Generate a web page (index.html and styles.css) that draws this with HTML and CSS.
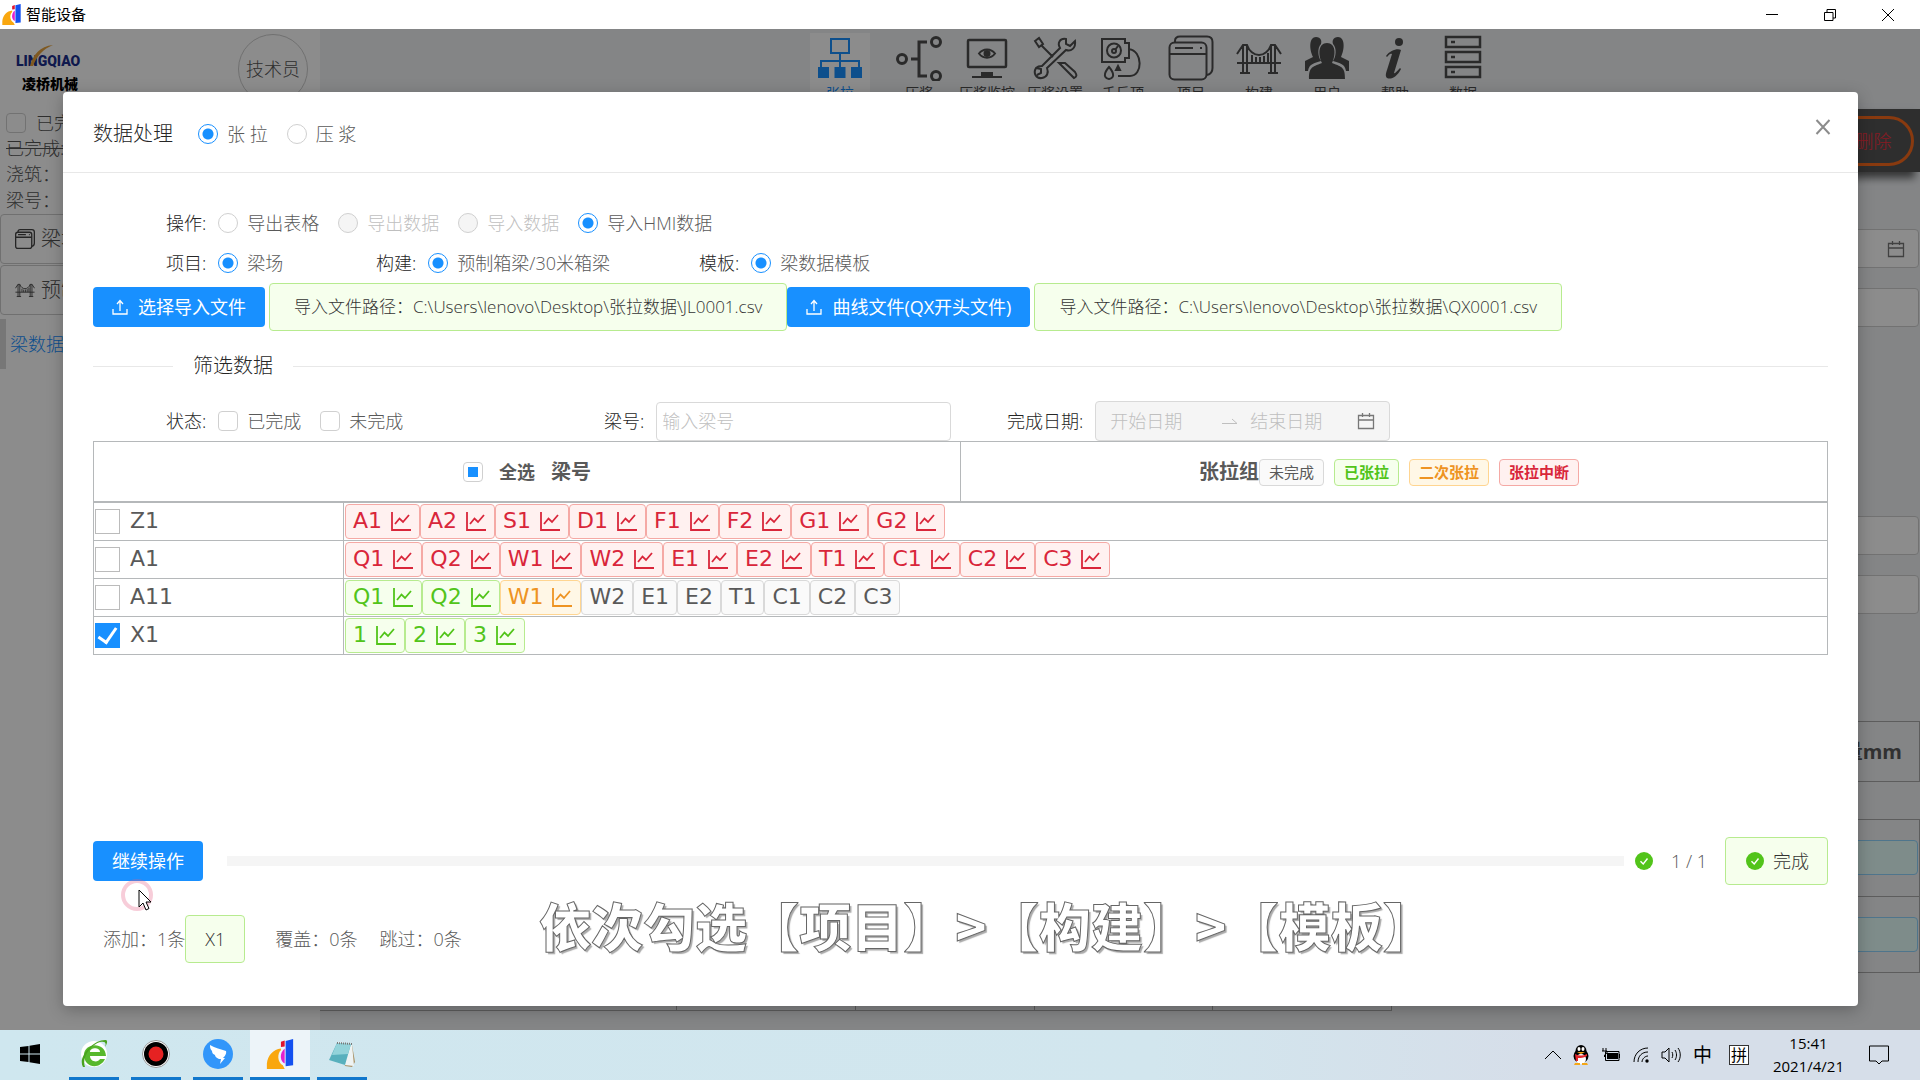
FILE: index.html
```html
<!DOCTYPE html>
<html lang="zh-CN">
<head>
<meta charset="utf-8">
<title>智能设备</title>
<link rel="stylesheet" href="styles.css">
</head>
<body>
<svg class="sprite" aria-hidden="true">
  <symbol id="brand" viewBox="0 0 28 32"><path d="M0 32V26C1 17 7 11 15 10V12C11 15 11 25 17 28L19 32Z" fill="#f9a70f"/><path d="M15 3L19 1.500V8L15 8.500Z" fill="#e0142d"/><path d="M19 10V26C14 24 13 15 19 10Z" fill="#e020d0"/><path d="M20 2L28 0V28L20 29Z" fill="#1450f0"/></symbol>
  <symbol id="chart" viewBox="0 0 22 22"><path d="M2 2V20H21M5 14L9.500 8.500L13 12L19 5" fill="none" stroke="currentColor" stroke-width="1.800"/></symbol>
  <symbol id="upload" viewBox="0 0 16 16"><path d="M1 10V15H15V10M8 12V2M5 5L8 1.500L11 5" fill="none" stroke="currentColor" stroke-width="1.300"/></symbol>
  <symbol id="calendar" viewBox="0 0 18 18"><path d="M1.500 3.500H16.500V16.500H1.500ZM1.500 8H16.500M5.500 1V5M12.500 1V5" fill="none" stroke="currentColor" stroke-width="1.300"/></symbol>
  <symbol id="done" viewBox="0 0 18 18"><circle cx="9" cy="9" r="9" fill="#52c41a"/><path d="M5.500 9.200L8.200 12L12.500 6.500" fill="none" stroke="#fff" stroke-width="1.400"/></symbol>
  <symbol id="windows" viewBox="0 0 46 46"><rect x="1.500" y="7.500" width="37" height="37" rx="5"/><path d="M7 7.500V6C7 3 9 1.500 12 1.500H39C43 1.500 44.500 4 44.500 7V33C44.500 37 43 39 39 40M1.500 19H38.500M7 13H25M32 13H34"/></symbol>
  <symbol id="bridge" viewBox="0 0 46 46"><path d="M1 19L7 10H11C13 16 18 20 23 20S33 16 35 10H39L45 19M7 10V38M11 10V38M35 10V38M39 10V38M1 28H45M4 38H14M32 38H42M16 20V28M20 22V28M24 22V28M28 21V28M32 18V28"/></symbol>
</svg>

<header class="titlebar">
  <svg class="titlebar-logo"><use href="#brand"/></svg>
  <h1 class="titlebar-name">智能设备</h1>
  <button class="win-btn" aria-label="最小化"><svg viewBox="0 0 12 12"><path d="M0 5.500H12"/></svg></button>
  <button class="win-btn" aria-label="还原"><svg viewBox="0 0 12 12"><path d="M.5 3.500H9V11.500H.5ZM3 3V.5H11.500V9H9"/></svg></button>
  <button class="win-btn" aria-label="关闭"><svg viewBox="0 0 12 12"><path d="M0 0L12 12M12 0L0 12"/></svg></button>
</header>

<div class="app">
  <div class="workspace">
    <aside class="sidebar">
      <div class="sidebar-top">
        <svg class="company" viewBox="0 0 66 52"><text x="0" y="20" class="company-en">LINGQIAO</text><path d="M14 20C17 9 24 0 37 -1C27 3 21 10 17 20Z" fill="#e8a33c"/><text x="6" y="43" class="company-cn">凌桥机械</text></svg>
        <span class="avatar">技术员</span>
      </div>
      <label class="side-check"><input type="checkbox" class="box">已完成</label>
      <p class="side-line struck">已完成:</p>
      <p class="side-line">浇筑：</p>
      <p class="side-line">梁号：</p>
      <a class="side-item" href="#"><svg class="line-icon"><use href="#windows"/></svg>梁场</a>
      <a class="side-item" href="#"><svg class="line-icon thinner"><use href="#bridge"/></svg>预制</a>
      <a class="side-current" href="#">梁数据</a>
    </aside>
    <main class="main">
      <nav class="menu">
        <a class="menu-item active" href="#"><svg viewBox="0 0 46 46"><path d="M14 4H32V18H14ZM23 18V36M4 34V26H42V34"/><path class="solid" d="M2 33H11V42H2ZM18.500 33H27.500V42H18.500ZM35 33H44V42H35Z"/></svg>张拉</a>
        <a class="menu-item" href="#"><svg viewBox="0 0 46 46"><g stroke-width="3"><circle cx="6" cy="24" r="4.500"/><circle cx="40" cy="7" r="4.500"/><circle cx="40" cy="41" r="4.500"/><path d="M15 24H22M31 7H23V41H31"/></g></svg>压浆</a>
        <a class="menu-item" href="#"><svg viewBox="0 0 46 46"><rect x="4" y="5" width="38" height="27" rx="1" stroke-width="2.500"/><path d="M15 18.500C19 13 27 13 31 18.500C27 24 19 24 15 18.500Z"/><circle class="solid" cx="23" cy="18.500" r="2.500"/><path class="solid" d="M17 37H29V41H38V43H8V41H17Z" stroke="none"/></svg>压浆监控</a>
        <a class="menu-item" href="#"><svg viewBox="0 0 46 46"><path d="M3 6L7 3L11 9L7 12ZM9 10L21 22M27 28L32 33L42 43C45 42 45 40 43 37L33 28ZM4 33C1 38 4 44 10 43C15 42 17 38 15 33L34 15C39 17 44 13 43 6L38 11L34 9V4C28 3 25 8 28 13L10 31C8 31 6 31 4 33ZM4 33L9 34V38L5 40"/></svg>压浆设置</a>
        <a class="menu-item" href="#"><svg viewBox="0 0 46 46"><path d="M2 4H25V8H29V23H25V27H2ZM29 14C43 16 43 41 30 41H18M9 32C3 39 4 43 9 44C14 43 15 39 9 32Z"/><circle cx="14" cy="15.500" r="7"/><circle cx="14" cy="16" r="2"/><path d="M15 15L18 11"/><path class="solid" d="M18 31L20 35H16Z"/></svg>千斤顶</a>
        <a class="menu-item" href="#"><svg viewBox="0 0 46 46"><use href="#windows"/></svg>项目</a>
        <a class="menu-item" href="#"><svg viewBox="0 0 46 46"><use href="#bridge"/></svg>构建</a>
        <a class="menu-item" href="#"><svg viewBox="0 0 46 46"><path class="solid" stroke="none" d="M1 36V26L9 22C5 14 5 2 12 2C17 2 18 6 17 9C13 13 14 22 17 26C10 28 5 29 4 36ZM45 36V26L37 22C41 14 41 2 34 2C29 2 28 6 29 9C33 13 32 22 29 26C36 28 41 29 42 36ZM5 44C5 33 7 32 18 28C14 20 14 8 23 8S32 20 28 28C39 32 41 33 41 44Z"/></svg>用户</a>
        <a class="menu-item" href="#"><svg viewBox="0 0 46 46"><circle class="solid" stroke="none" cx="27" cy="7" r="4"/><path class="solid" stroke="none" d="M14 21C18 15 26 13 29 15L22 38C23 39 25 36 28 33L29 34C25 42 19 45 15 43C13 41 14 38 15 35L20 19C18 18 17 20 15 22Z"/></svg>帮助</a>
        <a class="menu-item" href="#"><svg viewBox="0 0 46 46"><path stroke-width="2.500" d="M6 2H40V12H6ZM6 17H40V27H6ZM6 32H40V42H6ZM11 7H15M11 22H15M11 37H15"/></svg>数据</a>
      </nav>
      <div class="toolbar"><button class="delete">删除</button></div>
      <div class="bg-form">
        <div class="bg-field"><svg class="cal"><use href="#calendar"/></svg></div>
        <div class="bg-field"></div>
        <div class="bg-field later"></div>
        <div class="bg-field"></div>
      </div>
      <div class="bg-head">伸长量mm</div>
      <div class="bg-rows">
        <div class="bg-row"><div class="bg-cell"></div></div>
        <div class="bg-row"><div class="bg-cell"></div></div>
      </div>
      <div class="bg-grid"><i></i><i></i><i></i><i></i><i></i></div>
    </main>
  </div>

  <div class="mask">
    <section class="modal" role="dialog" aria-label="数据处理">
      <header class="modal-head">
        <h2 class="modal-title">数据处理</h2>
        <label class="opt"><input type="radio" name="kind" checked>张 拉</label>
        <label class="opt"><input type="radio" name="kind">压 浆</label>
        <button class="close" aria-label="关闭"><svg viewBox="0 0 16 16"><path d="M1.500 1L14.500 15M14.500 1L1.500 15"/></svg></button>
      </header>
      <div class="modal-body">
        <div class="form-row">
          <div class="field"><span class="name">操作:</span>
            <label class="opt"><input type="radio" name="op">导出表格</label>
            <label class="opt off"><input type="radio" name="op" disabled>导出数据</label>
            <label class="opt off"><input type="radio" name="op" disabled>导入数据</label>
            <label class="opt"><input type="radio" name="op" checked>导入HMI数据</label>
          </div>
        </div>
        <div class="form-row">
          <div class="field col-a"><span class="name">项目:</span><label class="opt"><input type="radio" name="project" checked>梁场</label></div>
          <div class="field col-b"><span class="name">构建:</span><label class="opt"><input type="radio" name="part" checked>预制箱梁/30米箱梁</label></div>
          <div class="field"><span class="name">模板:</span><label class="opt"><input type="radio" name="tpl" checked>梁数据模板</label></div>
        </div>
        <div class="files">
          <button class="primary"><svg><use href="#upload"/></svg>选择导入文件</button>
          <span class="note path">导入文件路径：C:\Users\lenovo\Desktop\张拉数据\JL0001.csv</span>
          <button class="primary"><svg><use href="#upload"/></svg>曲线文件(QX开头文件)</button>
          <span class="note path">导入文件路径：C:\Users\lenovo\Desktop\张拉数据\QX0001.csv</span>
        </div>
        <h3 class="divider">筛选数据</h3>
        <div class="form-row">
          <div class="field col-c"><span class="name">状态:</span>
            <label class="opt"><input type="checkbox" class="box">已完成</label>
            <label class="opt"><input type="checkbox" class="box">未完成</label>
          </div>
          <div class="field col-d"><label class="name" for="beam">梁号:</label><input id="beam" class="text" type="text" placeholder="输入梁号"></div>
          <div class="field"><label class="name" for="from">完成日期:</label>
            <div class="range"><input id="from" type="text" placeholder="开始日期" disabled><svg class="arrow" viewBox="0 0 16 10"><path d="M0 7.500H15L10 3"/></svg><input type="text" aria-label="结束日期" placeholder="结束日期" disabled><svg class="cal"><use href="#calendar"/></svg></div>
          </div>
        </div>
        <table class="beams">
          <colgroup><col class="c1"><col><col class="c3"></colgroup>
          <thead><tr>
            <th colspan="2"><div class="th"><label class="all"><input type="checkbox" class="box partial">全选</label>梁号</div></th>
            <th><div class="th groups">张拉组<span class="key plain">未完成</span><span class="key green">已张拉</span><span class="key orange">二次张拉</span><span class="key red">张拉中断</span></div></th>
          </tr></thead>
          <tbody>
            <tr><td><label class="beam"><input type="checkbox">Z1</label></td><td colspan="2"><div class="tags">
              <span class="tag red">A1<svg><use href="#chart"/></svg></span><span class="tag red">A2<svg><use href="#chart"/></svg></span><span class="tag red">S1<svg><use href="#chart"/></svg></span><span class="tag red">D1<svg><use href="#chart"/></svg></span><span class="tag red">F1<svg><use href="#chart"/></svg></span><span class="tag red">F2<svg><use href="#chart"/></svg></span><span class="tag red">G1<svg><use href="#chart"/></svg></span><span class="tag red">G2<svg><use href="#chart"/></svg></span></div></td></tr>
            <tr><td><label class="beam"><input type="checkbox">A1</label></td><td colspan="2"><div class="tags">
              <span class="tag red">Q1<svg><use href="#chart"/></svg></span><span class="tag red">Q2<svg><use href="#chart"/></svg></span><span class="tag red">W1<svg><use href="#chart"/></svg></span><span class="tag red">W2<svg><use href="#chart"/></svg></span><span class="tag red">E1<svg><use href="#chart"/></svg></span><span class="tag red">E2<svg><use href="#chart"/></svg></span><span class="tag red">T1<svg><use href="#chart"/></svg></span><span class="tag red">C1<svg><use href="#chart"/></svg></span><span class="tag red">C2<svg><use href="#chart"/></svg></span><span class="tag red">C3<svg><use href="#chart"/></svg></span></div></td></tr>
            <tr><td><label class="beam"><input type="checkbox">A11</label></td><td colspan="2"><div class="tags">
              <span class="tag green">Q1<svg><use href="#chart"/></svg></span><span class="tag green">Q2<svg><use href="#chart"/></svg></span><span class="tag orange">W1<svg><use href="#chart"/></svg></span><span class="tag plain">W2</span><span class="tag plain">E1</span><span class="tag plain">E2</span><span class="tag plain">T1</span><span class="tag plain">C1</span><span class="tag plain">C2</span><span class="tag plain">C3</span></div></td></tr>
            <tr><td><label class="beam"><input type="checkbox" checked>X1</label></td><td colspan="2"><div class="tags">
              <span class="tag green">1<svg><use href="#chart"/></svg></span><span class="tag green">2<svg><use href="#chart"/></svg></span><span class="tag green">3<svg><use href="#chart"/></svg></span></div></td></tr>
          </tbody>
        </table>
        <div class="run">
          <div class="run-btn"><button class="primary">继续操作</button><span class="click-ring"></span><svg class="cursor" viewBox="0 0 14 22"><path d="M1 1V18L5 14L8 21L11 19.500L8 13H13Z"/></svg></div>
          <div class="bar" role="progressbar"></div>
          <svg class="ok"><use href="#done"/></svg>
          <span class="count">1 / 1</span>
          <span class="note finished"><svg class="ok"><use href="#done"/></svg>完成</span>
        </div>
        <div class="summary"><span>添加：1条</span><span class="note added">X1</span><span class="sum-b">覆盖：0条</span><span class="sum-c">跳过：0条</span></div>
      </div>
    </section>
  </div>
  <p class="caption">依次勾选【项目】&gt;【构建】&gt;【模板】</p>
</div>

<footer class="taskbar">
  <button class="task start" aria-label="开始"><svg viewBox="0 0 20 20" width="20" height="20"><path d="M0 3L8.500 2V9.500H0ZM9.500 1.800L20 0V9.500H9.500ZM0 10.500H8.500V18L0 17ZM9.500 10.500H20V20L9.500 18.200Z"/></svg></button>
  <button class="task open" aria-label="浏览器"><svg viewBox="0 0 28 30" width="28" height="30"><circle cx="14" cy="15" r="13" fill="#fff"/><path fill-rule="evenodd" d="M26 17H10C10 23 18 24 20 20H25C20 31 4 29 4 16C4 4 25 2 26 17ZM10 13H20C20 8 10 8 10 13Z" fill="#57b82c"/><path d="M3 28C-3 18 14 0 26 1C28 2 27 5 25 8C27 3 24 2 20 3C12 5 1 18 5 28Z" fill="#49a31e"/></svg></button>
  <button class="task open" aria-label="录屏"><svg viewBox="0 0 28 28" width="28" height="28"><circle cx="14" cy="14" r="13.500" fill="#fff" stroke="#999"/><circle cx="14" cy="14" r="12"/><circle cx="14" cy="14" r="7.500" fill="#e62222"/></svg></button>
  <button class="task open" aria-label="钉钉"><svg viewBox="0 0 30 30" width="30" height="30"><circle cx="15" cy="15" r="15" fill="#3296fa"/><path d="M7 6C12 9 18 10 23 12C24 15 21 18 20 19H22L17 25L18 20H16C13 19 12 17 12 16C10 15 9 14 9 12C7 10 7 8 7 6Z" fill="#fff"/></svg></button>
  <button class="task open current" aria-label="智能设备"><svg width="28" height="30"><use href="#brand"/></svg></button>
  <button class="task open" aria-label="记事本"><svg viewBox="0 0 28 28" width="28" height="28"><path d="M10 3L24 5L27 22L24 27L17 26Z" fill="#a98f62"/><path d="M10 2L24 4L26 26L16 25Z" fill="#eef3f3"/><path d="M9 3L23 4L17 25L1 20Z" fill="#58b0bd"/><path d="M9 3L23 4L20 14L4 15Z" fill="#93d3da"/><path d="M9 3L24 4" stroke="#777" stroke-dasharray="1 1" stroke-width="2"/></svg></button>
  <div class="tray">
    <svg viewBox="0 0 16 10" width="16" height="10"><path d="M0 9L8 1L16 9" class="thin"/></svg>
    <svg viewBox="0 0 16 20" width="16" height="20"><ellipse cx="8" cy="11" rx="7.500" ry="7"/><ellipse cx="8" cy="6" rx="5.500" ry="6"/><ellipse cx="8" cy="14" rx="5" ry="5" fill="#fff"/><path d="M2 9C6 11 10 11 14 9V11C10 13 8 13 5 13V16H3Z" fill="#e3252b"/><ellipse cx="6" cy="4" rx="1.500" ry="2" fill="#fff"/><ellipse cx="10" cy="4" rx="1.500" ry="2" fill="#fff"/><path d="M4 7H12L8 9ZM2 18H7V20H1ZM9 18H14L15 20H9Z" fill="#f5a616"/></svg>
    <svg viewBox="0 0 20 14" width="20" height="14"><path d="M4.500 3.500H18V12.500H4.500ZM18.500 6V10M2 0V3M5 0V3M1 3H6V5L3.500 7V9" class="thin"/><path d="M6 5H17V11H6Z"/></svg>
    <svg viewBox="0 0 16 16" width="16" height="16"><path d="M1 15C1 7 7 1 15 1M5 15C5 9 9 5 15 5M9 15C9 12 12 9 15 9" class="thin"/><circle cx="14" cy="14" r="1.700"/></svg>
    <svg viewBox="0 0 20 16" width="20" height="16"><path d="M1 5H4L8 1V15L4 11H1ZM11 5C12 7 12 9 11 11M14 3C16 6 16 10 14 13M17 1C20 5 20 11 17 15" class="thin"/></svg>
    <span class="ime">中</span>
    <span class="pinyin">拼</span>
    <span class="clock"><time>15:41</time><time>2021/4/21</time></span>
    <svg viewBox="0 0 20 20" width="20" height="20" class="notice"><path d="M.5 1H19.500V16H13L10 19L7 16H.5Z" class="thin"/></svg>
  </div>
</footer>
</body>
</html>
```
FILE: styles.css
```css
* { box-sizing: border-box; }
body {
  margin: 0;
  height: 100vh;
  display: flex;
  flex-direction: column;
  overflow: hidden;
  font: 300 18px/28px "Open Sans", "Noto Sans CJK SC", sans-serif;
  color: #595959;
}
h1, h2, h3, p { margin: 0; font-weight: inherit; }
button, input { font: inherit; color: inherit; margin: 0; padding: 0; border: 0; background: none; flex: none; }
a { color: inherit; text-decoration: none; }
svg { flex: none; }
.sprite { position: absolute; width: 0; height: 0; }

/* window frame */
.titlebar { display: flex; align-items: center; height: 29px; padding-right: 3px; background: #fff; }
.titlebar-logo { width: 19px; height: 21px; margin: 0 5px 0 2px; }
.titlebar-name { flex: 1; font-size: 15px; line-height: 26px; height: 28px; font-weight: 400; color: #000; }
.win-btn { width: 58px; height: 29px; display: flex; align-items: center; justify-content: center; }
.win-btn svg { width: 12px; height: 12px; fill: none; stroke: #000; overflow: visible; }

/* page behind the dialog */
.app { position: relative; flex: 1; min-height: 0; overflow: hidden; }
.workspace { display: flex; height: 100%; }
.sidebar { width: 320px; background: #fff; color: #555; }
.sidebar-top { display: flex; justify-content: space-between; align-items: flex-start; height: 80px; padding: 5px 12px 0 16px; }
.company { width: 66px; height: 52px; margin-top: 12px; overflow: visible; }
.company-en { font: 900 14px Roboto, sans-serif; fill: #1c2f8c; }
.company-cn { font: 900 14px "Noto Sans CJK SC", sans-serif; fill: #000; }
.avatar { width: 70px; height: 70px; border: 1px solid #ccc; border-radius: 50%; display: flex; align-items: center; justify-content: center; }
.side-check { display: flex; align-items: center; gap: 10px; padding-left: 6px; height: 27px; }
.side-line { height: 26px; line-height: 24px; padding-left: 6px; }
.struck { text-decoration: line-through; }
.side-item { display: flex; align-items: center; gap: 6px; height: 50px; margin-bottom: 1px; padding-left: 14px; border: 1px solid #ccc; border-radius: 4px; font-size: 20px; }
.line-icon { width: 20px; height: 20px; fill: none; stroke: #444; stroke-width: 3; }
.thinner { stroke-width: 2; }
.side-current { display: block; margin-top: 4px; height: 50px; line-height: 50px; padding-left: 4px; border-left: 6px solid #d9d9d9; color: #1890ff; }
.main { flex: 1; min-width: 0; background: #f0f2f5; }
.menu { display: flex; justify-content: center; height: 80px; padding: 4px 0 0 67px; overflow: hidden; }
.menu-item { width: 68px; flex: none; text-align: center; font-size: 14px; font-weight: 400; line-height: 20px; color: #4d4d4d; white-space: nowrap; }
.menu-item svg { display: block; width: 46px; height: 46px; margin: 2px auto; fill: none; stroke: #4d4d4d; stroke-width: 2; }
.menu-item .solid { fill: #4d4d4d; }
.menu-item.active { width: 60px; margin-right: 15px; background: #fff; color: #1890ff; }
.menu-item.active svg { stroke: #1890ff; }
.menu-item.active .solid { fill: #1890ff; }
.toolbar { display: flex; justify-content: flex-end; align-items: center; height: 63px; padding-right: 6px; background: #555; box-shadow: -5px 6px 8px rgba(0, 0, 0, .6); }
.delete { width: 120px; height: 50px; border: 3px solid #f96a1c; border-radius: 25px; color: #f53040; padding-left: 39px; }
.bg-form { padding: 57px 1px 0; display: flex; flex-direction: column; gap: 20px; }
.bg-field { display: flex; align-items: center; justify-content: flex-end; height: 39px; padding-right: 13px; border: 1px solid #d0d0d0; border-radius: 4px; background: #fff; }
.later { margin-top: 169px; }
.cal { width: 18px; height: 18px; color: #777; }
.bg-head { margin-top: 107px; height: 61px; line-height: 60px; border: 1px solid #aaa; padding-right: 17px; text-align: right; font-size: 20px; font-weight: 700; }
.bg-rows { margin-top: 37px; border: 1px solid #aaa; }
.bg-row { height: 76px; padding: 20px 1px; }
.bg-row + .bg-row { border-top: 1px solid #aaa; }
.bg-cell { height: 35px; border: 1px solid #91d5ff; border-radius: 4px; background: #e6fffb; }
.bg-grid { display: grid; grid-template-columns: 2fr 1fr 1fr 1fr 1fr; width: 67%; height: 38px; }
.bg-grid i { border: solid #aaa; border-width: 0 1px 1px 0; }

/* dialog */
.mask { position: absolute; inset: 0; display: flex; padding: 63px 62px 24px 63px; background: rgba(0, 0, 0, .45); }
.modal { flex: 1; min-width: 0; display: flex; flex-direction: column; background: #fff; border-radius: 4px; box-shadow: 0 4px 16px rgba(0, 0, 0, .25); }
.modal-head { display: flex; align-items: center; height: 81px; padding: 3px 30px 0; border-bottom: 1px solid #e8e8e8; }
.modal-title { font-size: 20px; margin-right: 25px; color: #262626; }
.close { margin: 0 -3px 14px auto; width: 16px; height: 16px; display: flex; }
.close svg { width: 16px; height: 16px; fill: none; stroke: #8c8c8c; stroke-width: 2; }
.modal-body { flex: 1; display: flex; flex-direction: column; padding: 30px 30px 43px; }
.form-row { display: flex; height: 40px; padding-left: 73px; }
.field { display: flex; align-items: center; }
.name { margin-right: 12px; color: #262626; }
.col-a { width: 210px; }
.col-b { width: 323px; }
.col-c { width: 438px; }
.col-d { width: 403px; }
.opt { display: flex; align-items: center; gap: 9px; margin-right: 19px; white-space: nowrap; }
.off { color: #bfbfbf; }
input[type="radio"], .box { appearance: none; width: 20px; height: 20px; border: 1px solid #d0d0d0; border-radius: 50%; background: #fff; }
input[type="radio"]:checked { border-color: #1890ff; background: radial-gradient(#1890ff 5px, #fff 6px); }
input[type="radio"]:disabled { background: #f5f5f5; }
.box { border-radius: 4px; background: none; }
.partial { background: linear-gradient(#1890ff, #1890ff) center / 10px 10px no-repeat; }
.files { display: flex; align-items: center; height: 48px; }
.primary { display: flex; align-items: center; gap: 10px; height: 40px; padding: 0 19px; border-radius: 4px; background: #1890ff; color: #fff; font-weight: 400; white-space: nowrap; }
.primary svg { width: 16px; height: 16px; }
.note { display: flex; align-items: center; height: 48px; padding: 0 19px; border: 1px solid #b7eb8f; border-radius: 4px; background: #f6ffed; color: #333; white-space: nowrap; }
.path { margin-left: 4px; padding: 0 24px; font-size: 17px; }
.divider { display: flex; align-items: center; gap: 20px; margin: 20px 0; height: 30px; font-size: 20px; color: #262626; }
.divider::before, .divider::after { content: ""; height: 1px; background: #e8e8e8; width: 80px; }
.divider::after { flex: 1; }
.text { width: 295px; height: 39px; padding: 0 5px; border: 1px solid #d9d9d9; border-radius: 4px; }
::placeholder { color: #bfbfbf; opacity: 1; }
.range { display: flex; align-items: center; width: 295px; height: 40px; padding: 0 14px; border: 1px solid #d9d9d9; border-radius: 4px; background: #f5f5f5; }
.range input { width: 112px; }
.range input + svg.cal { margin-left: auto; }
.arrow { width: 16px; height: 10px; margin-right: 12px; fill: none; stroke: #bfbfbf; stroke-width: 1; }
.arrow + input { width: 90px; }

/* beam table */
.beams { width: 100%; table-layout: fixed; border-collapse: collapse; font: 400 22px/32px "DejaVu Sans", sans-serif; }
.c1 { width: 250px; }
.c3 { width: 50%; }
.beams th, .beams td { border: 1px solid #b5b8ba; padding: 1px; }
.beams th { height: 60px; padding-top: 3px; border-bottom-width: 2px; font: 700 20px/28px "Open Sans", "Noto Sans CJK SC", sans-serif; }
.th { display: flex; align-items: center; justify-content: center; }
.all { display: flex; align-items: center; gap: 16px; margin-right: 16px; font-size: 18px; }
.key { height: 27px; line-height: 25px; padding: 0 9px; margin-right: 10px; border: 1px solid; border-radius: 4px; font-size: 15px; }
.beam { display: flex; align-items: center; gap: 10px; }
.beam input { appearance: none; width: 25px; height: 25px; border: 1px solid #bbb; }
.beam input:checked { border-color: #1890ff; background: #1890ff; display: flex; align-items: center; justify-content: center; }
.beam input:checked::before { content: ""; width: 8px; height: 16px; margin-bottom: 4px; border: solid #fff; border-width: 0 3px 3px 0; transform: rotate(35deg); }
.tags { display: flex; height: 35px; }
.tag { display: flex; align-items: center; gap: 8px; padding: 0 7px; border: 1px solid; border-radius: 4px; }
.tag svg { width: 22px; height: 22px; }
.beams .red { color: #d9263a; background: #fff1f0; border-color: #f5a9a5; }
.beams .green { color: #52c41a; background: #f6ffed; border-color: #b7eb8f; }
.beams .orange { color: #ee9322; background: #fff7e6; border-color: #ffd591; }
.beams .plain { color: #595959; background: #fafafa; border-color: #d9d9d9; font-weight: 400; }

/* progress */
.run { display: flex; align-items: center; margin-top: auto; }
.run-btn { position: relative; margin-right: 24px; }
.click-ring { position: absolute; left: 28px; top: 38px; width: 32px; height: 32px; border: 4px solid rgba(230, 90, 130, .3); border-radius: 50%; }
.cursor { position: absolute; left: 45px; top: 48px; width: 14px; height: 22px; fill: #fff; stroke: #000; }
.bar { flex: 1; height: 10px; background: #f5f5f5; }
.ok { width: 18px; height: 18px; }
.run > .ok { margin: 0 18px 0 11px; }
.count { margin-right: 18px; }
.finished { gap: 9px; padding: 0 18px 0 20px; }
.summary { display: flex; align-items: center; margin-top: 30px; padding-left: 10px; white-space: nowrap; }
.sum-b { margin-left: 30px; }
.sum-c { margin-left: 22px; }
.caption { position: absolute; left: 0; right: 0; bottom: 69px; padding-left: 54px; text-align: center; font: 900 52px/72px "Noto Sans CJK SC", sans-serif; color: #fff; -webkit-text-stroke: 1px #666; text-shadow: 2px 2px 1px #aaa; pointer-events: none; }

/* taskbar */
.taskbar { display: flex; height: 50px; background: linear-gradient(90deg, #cfe7ef, #d2e6ee 60%, #d6dee9 80%); color: #000; }
.task { width: 50px; margin: 0 6px; border-bottom: 3px solid transparent; display: flex; align-items: center; justify-content: center; }
.start { margin: 0 8px 0 5px; }
.open { border-bottom-color: #1177cc; }
.current { width: 60px; margin: 0 1px; background: #edf4f9; }
.tray { display: flex; align-items: center; gap: 12px; margin-left: auto; padding-right: 31px; font-weight: 400; }
.thin { fill: none; stroke: #000; stroke-width: 1; }
.ime { font-size: 19px; }
.pinyin { width: 20px; height: 20px; margin-left: 5px; border: 1px solid #333; background: #fff; font-size: 16px; line-height: 18px; text-align: center; }
.clock { display: flex; flex-direction: column; align-items: center; font-size: 15px; line-height: 23px; margin: 0 13px 0 12px; }
```
